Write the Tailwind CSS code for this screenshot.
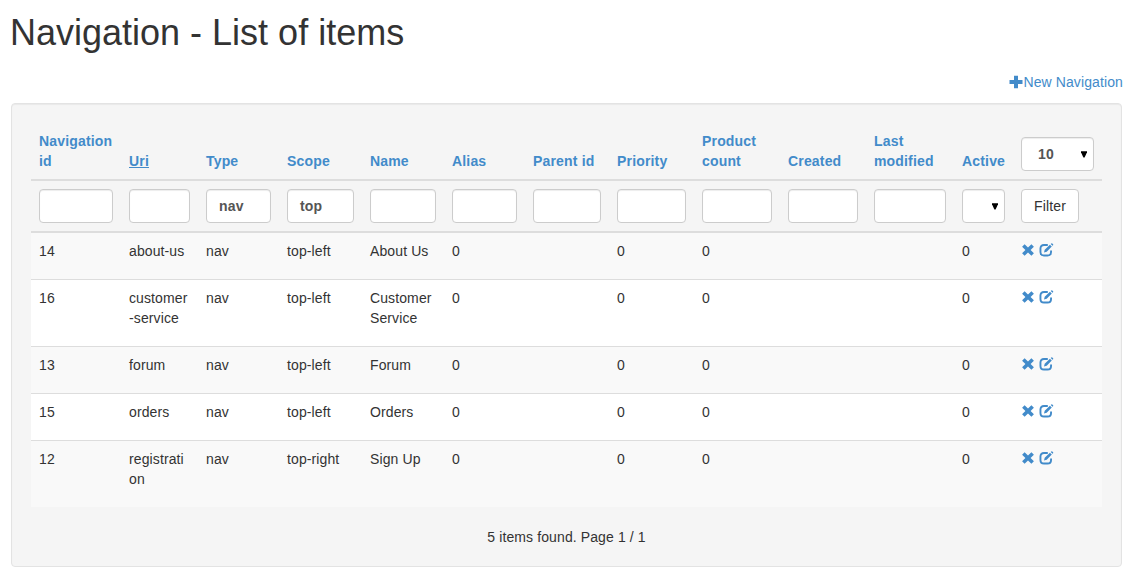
<!DOCTYPE html>
<html lang="en">
<head>
<meta charset="utf-8">
<title>Navigation - List of items</title>
<script src="https://cdn.jsdelivr.net/npm/@tailwindcss/browser@4"></script>
</head>
<body class="bg-white font-['Liberation_Sans',Arial,sans-serif] text-[14px] leading-5 tracking-[0.11px] text-[#333] overflow-hidden">
<svg class="hidden">
  <symbol id="plus" viewBox="0 0 14 14"><path fill="currentColor" d="M5 .7h4v4.300h4.500v4H9v4.300H5V9H.5V5H5z"/></symbol>
  <symbol id="remove" viewBox="0 0 14 14"><path fill="currentColor" d="M3.600 1.200 7 4.600l3.400-3.400 2.500 2.500L9.600 7l3.300 3.300-2.500 2.500L7 9.400l-3.400 3.400-2.500-2.500L4.400 7 1.100 3.700z"/></symbol>
  <symbol id="edit" viewBox="0 0 15 14"><path fill="none" stroke="currentColor" stroke-width="1.900" d="M8.800 1.950H5Q1.450 1.950 1.450 5.500v3.400q0 3.550 3.550 3.550h3.500q3.550 0 3.550-3.550V7.600"/><path fill="currentColor" d="M5 9.600l.7-2.900L10.900 1.700l1.900 1.900-5.100 5.200zM11.700 1l.6-.6q.5-.4 1 0l.8.8q.4.500 0 1l-.600.600z"/></symbol>
  <symbol id="arrow" viewBox="0 0 6 7"><path d="M0 .3h6v1L3.600 6.500H2.400L0 1.300z"/></symbol>
</svg>
<main class="pl-[11px] pr-[23px]">
  <h1 class="-ml-px pt-[13px] text-[36px] leading-10 font-normal tracking-normal">Navigation - List of items</h1>
  <div class="mt-[19px] -mr-px flex h-[31px] justify-end text-[#428bca]">
    <a class="flex h-5"><svg class="mt-[3px] h-[14px] w-[14px]"><use href="#plus"/></svg>New Navigation</a>
  </div>
  <section class="h-[464px] rounded-[4px] border border-[#e3e3e3] bg-[#f5f5f5] px-[19px] pt-[19px] shadow-[inset_0_1px_1px_rgba(0,0,0,0.05)]">
    <table class="w-[1071px] table-fixed border-separate border-spacing-0 text-left">
      <colgroup><col class="w-[90px]"><col class="w-[77px]"><col class="w-[81px]"><col class="w-[83px]"><col class="w-[82px]"><col class="w-[81px]"><col class="w-[84px]"><col class="w-[85px]"><col class="w-[86px]"><col class="w-[86px]"><col class="w-[88px]"><col class="w-[59px]"><col class="w-[89px]"></colgroup>
      <thead><tr id="head" class="h-[52px] text-[#428bca]"></tr><tr id="filters" class="h-[52px]"></tr></thead>
      <tbody id="rows"></tbody>
    </table>
    <p class="mt-5 text-center">5 items found. Page 1 / 1</p>
  </section>
</main>
<script>
const th = 'border-b-2 border-[#ddd] p-2 align-bottom font-bold tracking-[0.17px]';
const box = 'flex h-[34px] w-full items-center rounded-[4px] border border-[#ccc] bg-white px-3 font-bold text-[#555] shadow-[inset_0_1px_1px_rgba(0,0,0,0.075)]';
const arrow = '<svg class="ml-auto -mr-[6px] h-[7px] w-[6px] text-black"><use href="#arrow"/></svg>';
const heads = ['Navigation id','Uri','Type','Scope','Name','Alias','Parent id','Priority','Product count','Created','Last modified','Active'];
document.getElementById('head').innerHTML = heads.map((h, i) =>
  `<th class="${th}"><a class="${i === 1 ? 'underline' : ''}">${h}</a></th>`).join('') +
  `<th class="${th}"><div class="${box}"><span class="pl-1">10</span>${arrow}</div></th>`;
const values = {2: 'nav', 3: 'top'};
document.getElementById('filters').innerHTML = heads.map((h, i) =>
  `<th class="${th}"><div class="${box}">${i === 11 ? arrow : values[i] || ''}</div></th>`).join('') +
  `<th class="${th}"><button class="block h-[34px] w-[58px] rounded-[4px] border border-[#ccc] bg-white text-center font-normal text-[#333]">Filter</button></th>`;
const data = [
  ['14','about-us','nav','top-left','About Us'],
  ['16','customer<br>-service','nav','top-left','Customer Service'],
  ['13','forum','nav','top-left','Forum'],
  ['15','orders','nav','top-left','Orders'],
  ['12','registrati<br>on','nav','top-right','Sign Up']];
document.getElementById('rows').innerHTML = data.map((r, n) => {
  const td = n ? 'border-t border-[#ddd] px-2 pt-2 pb-[18px] align-top' : 'px-2 pt-2 pb-[18px] align-top';
  const cells = [...r, '0', '', '0', '0', '', '', '0'];
  return `<tr class="${n % 2 ? 'bg-white' : 'bg-[#f9f9f9]'}">` + cells.map(c => `<td class="${td}">${c}</td>`).join('') +
    `<td class="${td}"><div class="flex h-5 gap-1 pt-[2px] text-[#428bca]"><svg class="h-[14px] w-[14px]"><use href="#remove"/></svg><svg class="h-[14px] w-[15px]"><use href="#edit"/></svg></div></td></tr>`;
}).join('');
</script>
</body>
</html>
